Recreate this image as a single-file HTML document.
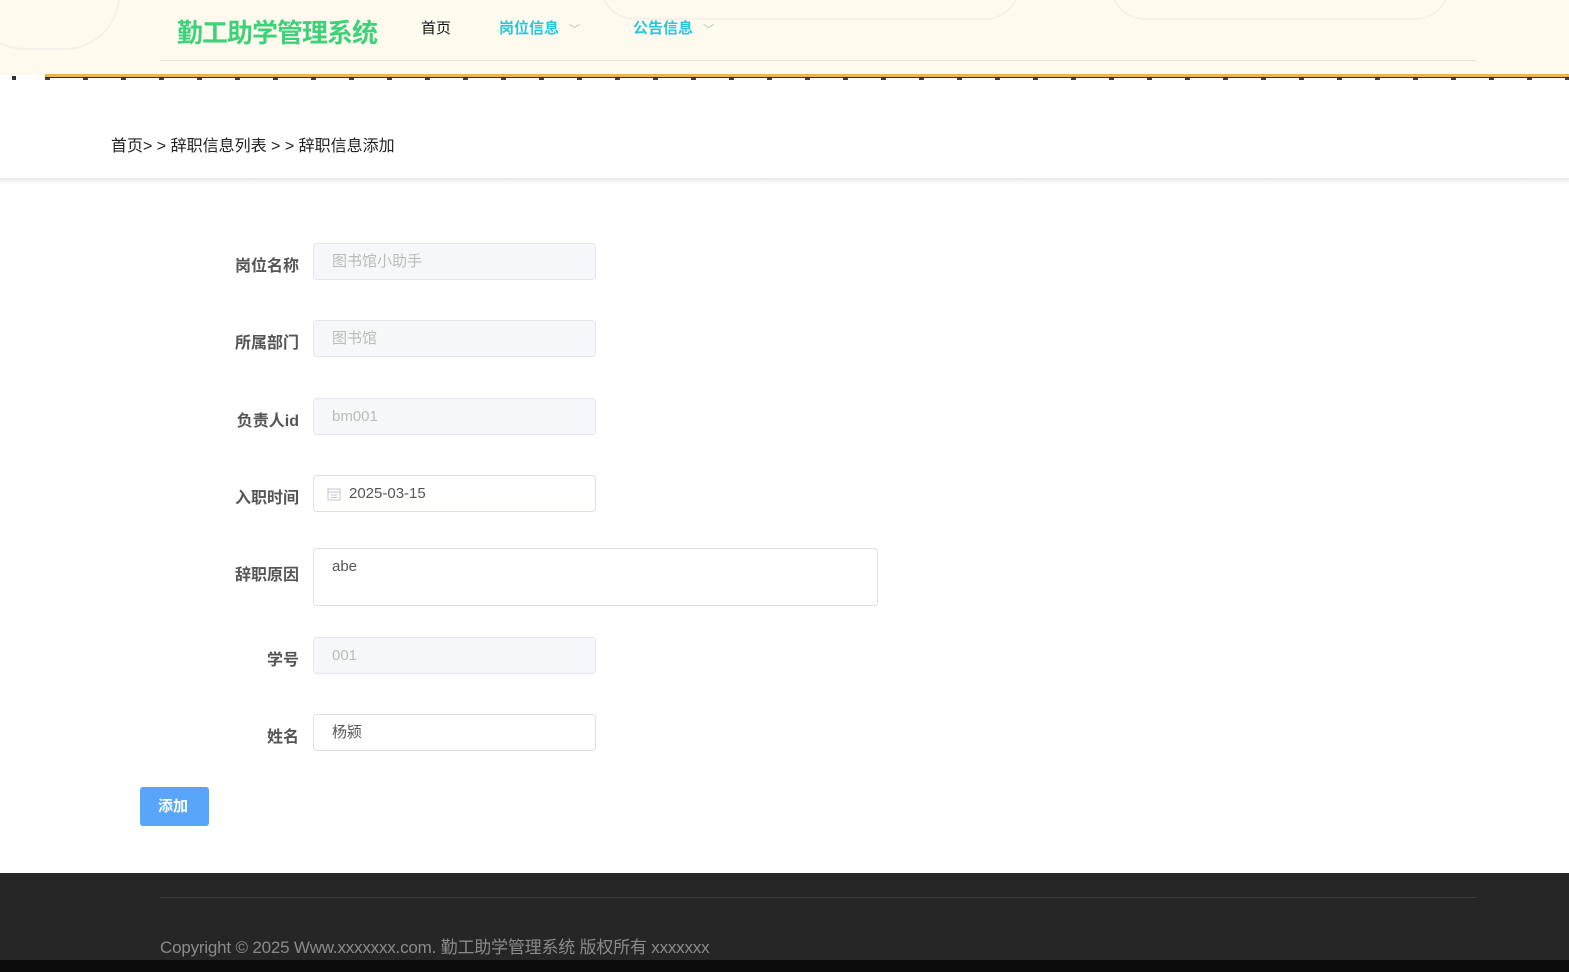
<!DOCTYPE html>
<html><head><meta charset="utf-8">
<style>
*{margin:0;padding:0;box-sizing:border-box}
body{width:1569px;height:972px;overflow:hidden;background:#fff;font-family:"Liberation Sans","Noto Sans CJK SC",sans-serif;position:relative}
.hdr{position:absolute;left:0;top:0;width:1569px;height:75px;background:#fefaee;overflow:hidden}
.ring{position:absolute;border:2px solid #f5f1e8;border-radius:60px}
.hline{position:absolute;left:160px;top:60px;width:1316px;height:1px;background:#e8e4da}
.gold{position:absolute;left:45px;top:74px;width:1524px;height:3px;background:#e8b84a}
.dots{position:absolute;left:45px;top:77px;width:1524px;height:3px;background:repeating-linear-gradient(90deg,#222 0 5px,transparent 5px 38px);opacity:.85}
.dash{position:absolute;left:45px;top:77px;width:1524px;height:1px;background:#333}
.logo{position:absolute;left:177px;top:13px;font-size:26px;color:#3fd07a;font-weight:bold;letter-spacing:-1px}
.nav{position:absolute;top:17px;font-size:15px;font-weight:bold}
.crumb{position:absolute;left:111px;top:132px;font-size:16px;color:#222}
.shadowbar{position:absolute;left:0;top:178px;width:1569px;height:6px;background:linear-gradient(#e8e8e8,#fff)}
.lbl{position:absolute;width:110px;left:189px;text-align:right;font-size:16px;font-weight:bold;color:#555}
.inp{position:absolute;left:313px;width:283px;height:37px;border:1px solid #dcdfe6;border-radius:4px;font-size:15px;padding-left:18px;line-height:35px}
.dis{background:#f5f7fa;border-color:#e4e7ed;color:#bbb}
.btn{position:absolute;left:140px;top:787px;width:69px;height:39px;background:#58a6fb;border-radius:3px;color:#fff;font-size:15px;line-height:39px;padding-left:18px;font-weight:bold}
.foot{position:absolute;left:0;top:873px;width:1569px;height:87px;background:#262626}
.foot .l{position:absolute;left:160px;top:24px;width:1316px;height:1px;background:#3a3a3a}
.foot .t{position:absolute;left:160px;top:65px;font-size:17px;color:#8a8a8a;line-height:20px;letter-spacing:-0.2px}
.fb{position:absolute;left:0;top:960px;width:1569px;height:12px;background:#0c0c0c}
</style></head><body>
<div class="hdr">
 <div class="ring" style="left:-30px;top:-60px;width:150px;height:110px"></div>
 <div class="ring" style="left:600px;top:-50px;width:420px;height:70px;border-radius:40px"></div>
 <div class="ring" style="left:1110px;top:-50px;width:340px;height:70px;border-radius:40px"></div>
 <div class="hline"></div>
 <div class="logo">勤工助学管理系统</div>
 <div class="nav" style="left:421px;color:#111;font-weight:normal">首页</div>
 <div class="nav" style="left:499px;color:#29c5dc">岗位信息 <span style="color:#bbb;font-size:11px;margin-left:6px;font-weight:normal">﹀</span></div>
 <div class="nav" style="left:633px;color:#29c5dc">公告信息 <span style="color:#bbb;font-size:11px;margin-left:6px;font-weight:normal">﹀</span></div>
</div>
<div class="gold"></div><div class="dash"></div><div class="dots"></div>
<div style="position:absolute;left:12px;top:76px;width:4px;height:4px;background:#333"></div>
<div class="crumb">首页&gt; &gt; 辞职信息列表 &gt; &gt; 辞职信息添加</div>
<div class="shadowbar"></div>

<div class="lbl" style="top:252px">岗位名称</div>
<div class="inp dis" style="top:243px">图书馆小助手</div>
<div class="lbl" style="top:329px">所属部门</div>
<div class="inp dis" style="top:320px">图书馆</div>
<div class="lbl" style="top:407px">负责人id</div>
<div class="inp dis" style="top:398px">bm001</div>
<div class="lbl" style="top:484px">入职时间</div>
<div class="inp" style="top:475px;color:#555;padding-left:35px">2025-03-15
 <svg style="position:absolute;left:13px;top:11px" width="14" height="14" viewBox="0 0 14 14"><rect x="1" y="2" width="12" height="11" fill="none" stroke="#c0c4cc"/><line x1="1" y1="5" x2="13" y2="5" stroke="#c0c4cc"/><line x1="4" y1="8" x2="10" y2="8" stroke="#c0c4cc"/><line x1="4" y1="10.5" x2="10" y2="10.5" stroke="#c0c4cc"/></svg>
</div>
<div class="lbl" style="top:561px">辞职原因</div>
<div class="inp" style="top:548px;width:565px;height:58px;line-height:normal;padding-top:9px;color:#555">abe</div>
<div class="lbl" style="top:646px">学号</div>
<div class="inp dis" style="top:637px">001</div>
<div class="lbl" style="top:723px">姓名</div>
<div class="inp" style="top:714px;color:#555">杨颍</div>
<div class="btn">添加</div>

<div class="foot"><div class="l"></div><div class="t">Copyright © 2025 Www.xxxxxxx.com. 勤工助学管理系统 版权所有 xxxxxxx</div></div>
<div class="fb"></div>
</body></html>
